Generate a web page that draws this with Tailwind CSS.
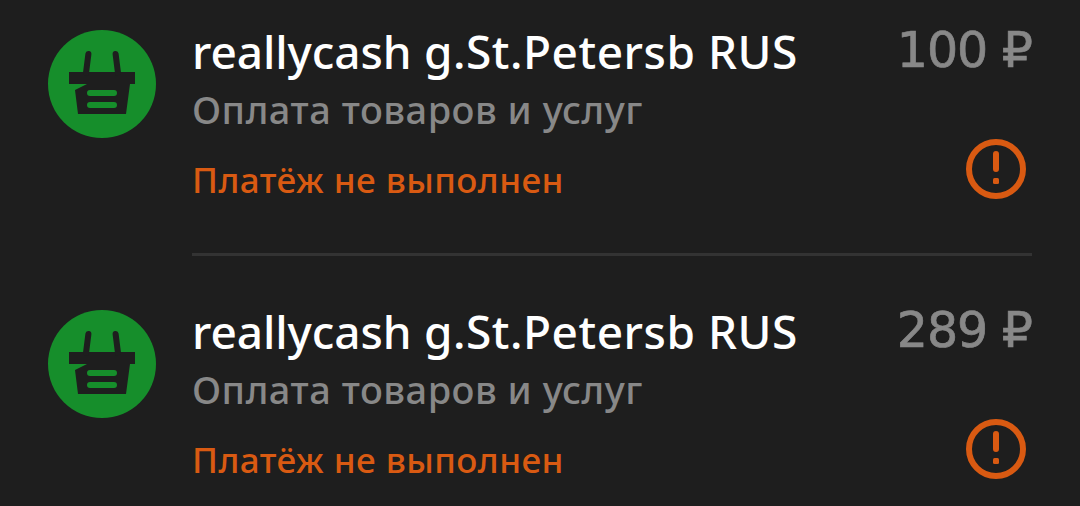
<!DOCTYPE html>
<html lang="ru">
<head>
  <meta charset="UTF-8" />
  <meta name="viewport" content="width=device-width, initial-scale=1.0" />
  <title>История операций</title>
  <script src="https://cdn.jsdelivr.net/npm/@tailwindcss/browser@4"></script>
</head>
<body class="bg-[#1e1e1e] h-[506px] overflow-hidden font-['Noto_Sans',sans-serif] font-medium">

  <!-- Shared icons -->
  <svg class="hidden">
    <symbol id="basket" viewBox="0 0 108 108">
      <circle cx="54" cy="54" r="54" fill="#168e2b" />
      <path d="M21 42H87V54H82L78 84H30L27 60L39 54H21Z" fill="#1e1e1e" />
      <path d="M40.4 24L38 43M67.6 24L70 43" stroke="#1e1e1e" stroke-width="6" stroke-linecap="round" />
      <path d="M42 63H66M42 75H66" stroke="#168e2b" stroke-width="6" stroke-linecap="round" />
    </symbol>
    <symbol id="alert" viewBox="0 0 60 60">
      <circle cx="30" cy="30" r="27" fill="none" stroke="#d95a12" stroke-width="6" />
      <rect x="27" y="12" width="6" height="21" rx="3" fill="#d95a12" />
      <rect x="27" y="39" width="6" height="6" rx="1.5" fill="#d95a12" />
    </symbol>
  </svg>

  <main class="flex flex-col gap-6 px-12">
    <article class="flex gap-9 h-[256px]">
      <svg class="size-[108px] mt-[30px] shrink-0"><use href="#basket" /></svg>
      <div class="flex grow justify-between border-b-[3px] border-[#333333] whitespace-nowrap">
        <div class="flex flex-col pt-[21px]">
          <h2 class="text-[46px] leading-[60px] text-white tracking-[0.52px]"><span class="tracking-[-0.1px]">reallycash</span> g.St.Petersb RUS</h2>
          <p class="text-[38px] leading-[56px] text-[#888888] tracking-[0.5px]">Оплата товаров и услуг</p>
          <p class="mt-[17px] text-[35px] leading-[52px] text-[#d95a12] tracking-[0.45px]">Платёж не выполнен</p>
        </div>
        <div class="flex flex-col items-end pt-[21px]">
          <p class="font-['DejaVu_Sans',sans-serif] text-[49px] leading-[60px] text-[#888888] tracking-[-1px] [-webkit-text-stroke:0.7px_#888888]">100 ₽</p>
          <svg class="size-[60px] mt-[58px] mr-1.5"><use href="#alert" /></svg>
        </div>
      </div>
    </article>

    <article class="flex gap-9 h-[226px]">
      <svg class="size-[108px] mt-[30px] shrink-0"><use href="#basket" /></svg>
      <div class="flex grow justify-between whitespace-nowrap">
        <div class="flex flex-col pt-[21px]">
          <h2 class="text-[46px] leading-[60px] text-white tracking-[0.52px]"><span class="tracking-[-0.1px]">reallycash</span> g.St.Petersb RUS</h2>
          <p class="text-[38px] leading-[56px] text-[#888888] tracking-[0.5px]">Оплата товаров и услуг</p>
          <p class="mt-[17px] text-[35px] leading-[52px] text-[#d95a12] tracking-[0.45px]">Платёж не выполнен</p>
        </div>
        <div class="flex flex-col items-end pt-[21px]">
          <p class="font-['DejaVu_Sans',sans-serif] text-[49px] leading-[60px] text-[#888888] tracking-[-1px] [-webkit-text-stroke:0.7px_#888888]">289 ₽</p>
          <svg class="size-[60px] mt-[58px] mr-1.5"><use href="#alert" /></svg>
        </div>
      </div>
    </article>
  </main>

</body>
</html>
